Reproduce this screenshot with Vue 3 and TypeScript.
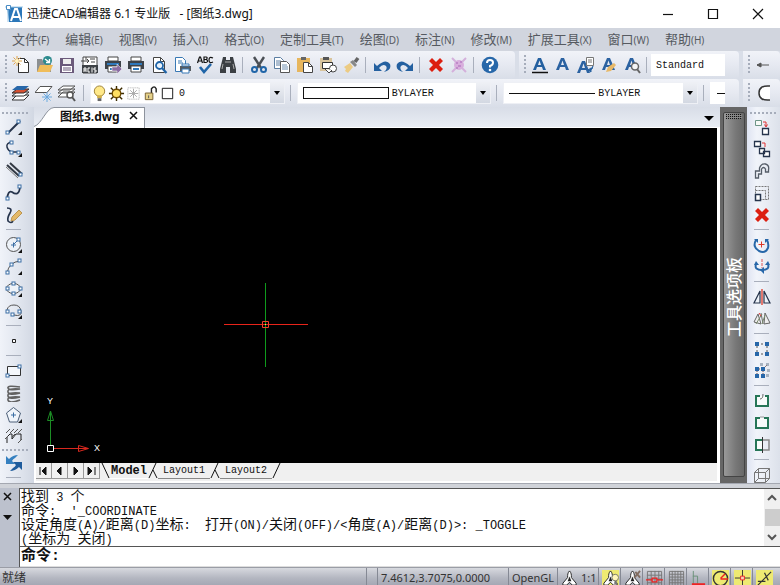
<script setup lang="ts">
import { ref } from 'vue'

const corner = '<path d="M17 13v4h-4z" fill="#111"/>'
const node = (x: number, y: number) =>
  `<rect x="${x}" y="${y}" width="3" height="3" fill="#fff" stroke="#3a6ea5"/>`
const letterA = (c: string) =>
  `<path d="M2 14L7 2h3l5 12h-3l-1-3H6l-1 3zM7 9h3L8.500 4.500z" fill="${c}" fill-rule="evenodd"/>`
const printer =
  '<path d="M4 1h10v4H4z" fill="#fff" stroke="#444"/><path d="M1 5h16v8H1z" fill="#3e4349"/><path d="M3 7h12v2H3z" fill="#2f79bd"/><path d="M4 10h10v6H4z" fill="#fff" stroke="#444"/><path d="M6 12h6v2H6z" fill="#2f79bd"/>'
const page =
  '<path d="M3.500 1.500h7l4 4v11h-11z" fill="#fff" stroke="#444"/><path d="M10.500 1.500v4h4" fill="none" stroke="#444"/>'
const scaleFig =
  '<path d="M9 1c2 2 2 4 2 7l5 6v2h-4l-3-3-3 3H2v-2l5-6c0-3 0-5 2-7z" fill="#fff" stroke="#222"/><path d="M9 7l-2 5h4z" fill="#222"/>'

const icons: Record<string, string> = {
  new: '<path d="M6.500 2.500h6l4 4v10h-10z" fill="#fff" stroke="#333"/><path d="M12.500 2.500v4h4" fill="none" stroke="#333"/><path d="M5 0v10M0 5h10M1.500 1.500l7 7M8.500 1.500l-7 7" stroke="#dfa34a"/><circle cx="5" cy="5" r="2" fill="#fff3c0"/>',
  open: '<path d="M2 3h5l1 2h8v11H2z" fill="#8b8f92"/><path d="M2 16l3-7h13l-3 7z" fill="#f0bd5a"/><circle cx="12.500" cy="4.500" r="4.500" fill="#2c8a8d"/><path d="M10 3l4 3M14.500 3v3.500H11" stroke="#fff" fill="none" stroke-width="1.400"/>',
  save: '<path d="M2 2h14v15H2z" fill="#6b5a7b"/><path d="M5 3h8v5H5z" fill="#eee"/><path d="M4 10h10v6H4z" fill="#fff"/><path d="M5 12h8M5 14h8" stroke="#6b5a7b"/>',
  acis: '<path d="M2 1h14v16H2z" fill="#fff" stroke="#444"/><path d="M1 9h16v8H1z" fill="#3e4247"/><path d="M3 16v-4h2v4M3 14h2M9 12H7v4h2M11 11.500v5M15 12h-2v2h2v2h-2" fill="none" stroke="#fff"/><path d="M0 5h8M6 3l2 2-2 2M9 3h5M10 6h4M5 1v3" stroke="#444" fill="none"/>',
  printPreview: printer + '<path d="M8 11h5V8l5 5-5 5v-3H8z" fill="#8b6da3" stroke="#fff" stroke-width=".5"/>',
  print: printer,
  preview: page + '<circle cx="9.500" cy="9.500" r="3.500" fill="#e8f2fb" stroke="#2065a8" stroke-width="1.800"/><path d="M12 12l4.500 5" stroke="#2065a8" stroke-width="2.200"/>',
  publish: '<path d="M2.500 1.500h7l3 3v11h-10z" fill="#fff" stroke="#3979b5"/><path d="M5 5h4M5 7h5" stroke="#3979b5"/><path d="M7 10h11v5H7z" fill="#555b62"/><path d="M9 8h7v2H9zM9 13h7v4H9z" fill="#fff" stroke="#3979b5"/>',
  spell: '<path d="M1.500 7l2-6h1l2 6M2.500 5h3M8 1v5.500h2q3-1 .5-3Q12 1 10 1zM8 3.500h2M17 2q-4-2-4 2t4 2" fill="none" stroke="#111" stroke-width="1.200"/><path d="M4 11l4 5 7-8" fill="none" stroke="#2065a8" stroke-width="2.600"/>',
  find: '<path d="M4 1h3v3h4V1h3l1 4 2 8v4h-6v-6H7v6H1v-4l2-8z" fill="#3b3f44"/><path d="M4 8l-1 5M14 8l1 5M6 6h6" stroke="#aaa"/>',
  cut: '<path d="M4 1l7 11M14 1L7 12" stroke="#4a4f55" stroke-width="2.400"/><circle cx="4.500" cy="13.500" r="2.500" fill="none" stroke="#2065a8" stroke-width="2"/><circle cx="13.500" cy="13.500" r="2.500" fill="none" stroke="#2065a8" stroke-width="2"/>',
  copy: '<path d="M1.500 1.500h6l3 3v8h-9z" fill="#fff" stroke="#5c7fa3"/><path d="M3 5h5M3 7h5M3 9h5" stroke="#5c7fa3"/><path d="M7.500 5.500h6l3 3v8h-9z" fill="#fff" stroke="#555"/><path d="M9 9h5M9 11h6M9 13h6" stroke="#6f8fb0"/>',
  paste: '<path d="M1 2h13v14H1z" fill="#e7b65d"/><path d="M5 1h5v3H5z" fill="#666"/><path d="M7.500 6.500h5l4 4v6h-9z" fill="#fff" stroke="#444"/><path d="M12.500 6.500v4h4" fill="none" stroke="#444"/>',
  pasteShape: '<path d="M1 2h12v13H1z" fill="#d8c49d"/><path d="M4 1h6v3H4z" fill="#555"/><path d="M3.500 6.500h10v6h-10z" fill="#fff" stroke="#333"/><circle cx="14" cy="12.500" r="3.500" fill="#fff" stroke="#444"/><path d="M6 13l4 4 3-3" fill="#fff" stroke="#444"/>',
  brush: '<path d="M2 11l6-4 3 4-5 6-3-2 1-2z" fill="#eccb83"/><path d="M8 6l5 5 2-2-4-5z" fill="#888"/><path d="M13 6l3-4" stroke="#666" stroke-width="3.500"/>',
  undo: '<path d="M1 7v8h8l-3-3q4-5 7-2 2 3-2 6 8-2 6-8-4-6-13 2z" fill="#2460a0"/>',
  redo: '<path d="M17 7v8H9l3-3Q8 7 5 10q-2 3 2 6-8-2-6-8 4-6 13 2z" fill="#2460a0"/>',
  erase: '<path d="M2 5l3-3 4 4 4-4 3 3-4 4 4 4-3 3-4-4-4 4-3-3 4-4z" fill="#dc1f10"/>',
  purge: '<circle cx="9" cy="9" r="5" fill="#d8aedd"/><path d="M2 2l4 4M16 2l-4 4M2 16l4-4M16 16l-4-4" stroke="#d4b0db" stroke-width="2"/><path d="M6 7h2M10 6h2M8 10h3M6 12h2" stroke="#c08aca" stroke-width="2"/>',
  help: '<circle cx="9" cy="9" r="8.300" fill="#2767a9"/><path d="M6 7q0-3 3-3t3 2.500T9 10v1.500" fill="none" stroke="#fff" stroke-width="2"/><circle cx="9" cy="14" r="1.300" fill="#fff"/>',
  textLine: letterA('#2460a0') + '<path d="M1 16.500h16" stroke="#111" stroke-width="1.500"/>',
  text: letterA('#2b62a1'),
  textStyle: '<g transform="translate(-2 3)">' + letterA('#2b62a1') + '</g><path d="M9.500 1.500h7v8h-7z" fill="#fff" stroke="#777"/><path d="M11 4h4M11 6h4" stroke="#777"/><path d="M12 14q4 0 4-4M11 14l3-2v4z" stroke="#2460a0" fill="#2460a0"/>',
  textEdit: letterA('#2b62a1') + '<path d="M6 16l2-5 6-4 2 2-5 6z" fill="#e8b968"/>',
  textFind: letterA('#2b62a1') + '<circle cx="12" cy="10.500" r="3.500" fill="#f6f6f6" stroke="#666" stroke-width="1.500"/><path d="M14 13l3 4" stroke="#666" stroke-width="2"/>',
  dimension: '<path d="M2 9h12" stroke="#555"/><path d="M2 9l4-2v4z" fill="#555" stroke="#555"/>',
  arcHalf: '<path d="M15 2Q4 1 4 9t11 7" fill="#fff" stroke="#333" stroke-width="1.500"/>',
  layers: '<path d="M5 11h12l-5 5H0z" fill="#fff" stroke="#333"/><path d="M5 8h12l-5 4H0z" fill="#fff" stroke="#333"/><path d="M5 5h12l-5 4H0z" fill="#d65030" stroke="#333"/><path d="M5 2h12l-5 4H0z" fill="#2767a9"/>',
  layerFreeze: '<path d="M5 2.500h12l-5 6H0z" fill="#fff" stroke="#555"/><path d="M12 8v10M7 13h10M8.500 9.500l7 7M15.500 9.500l-7 7" stroke="#6aa9df"/>',
  layerFind: '<path d="M5 8h12l-5 5H0zM5 5h12l-5 4H0zM5 2h12l-5 4H0z" fill="#fff" stroke="#555"/><circle cx="12" cy="11" r="3" fill="#fff" stroke="#555" stroke-width="1.500"/><path d="M14 13l3 4" stroke="#555" stroke-width="2"/>',
  bulb: '<circle cx="9" cy="6.500" r="5.500" fill="#ffe98a" stroke="#9b7d30"/><path d="M6.500 11h5v3h-5z" fill="#d2b048"/><path d="M7 14h4v3H7z" fill="#666"/>',
  sun: '<path d="M9 1v16M1 9h16M3 3l12 12M15 3L3 15" stroke="#3b2b00" stroke-width="1.500"/><circle cx="9" cy="9" r="4.500" fill="#ffdf62" stroke="#6d4a00" stroke-width="1.400"/>',
  frozen: '<path d="M3 3h12v12H3z" fill="none" stroke="#aaa" stroke-dasharray="1 1"/><path d="M9 4v10M4 9h10M5.500 5.500l7 7M12.500 5.500l-7 7" stroke="#aaa"/>',
  lock: '<path d="M10 9V4q3-4 5 0v4" fill="none" stroke="#222" stroke-width="1.500"/><path d="M3.500 8.500h8v7h-8z" fill="#e5d18a" stroke="#776030"/><path d="M7 11v3" stroke="#555"/>',
  swatch: '<path d="M3.500 3.500h11v11h-11z" fill="#fff" stroke="#111"/>',
  line: '<path d="M3 15L15 3" stroke="#26344c" stroke-width="2"/>' + node(1, 13) + node(12, 2) + corner,
  polyline: '<path d="M7 2Q1 3 2 7t5 5h7" fill="none" stroke="#26344c" stroke-width="1.500"/>' + node(5, 1) + node(5, 11) + node(12, 11) + corner,
  multiline: '<path d="M2 3l12 11M5 1l12 11" stroke="#333a44" stroke-width="2"/><path d="M1 5l12 11" stroke="#777"/>' + node(14, 11),
  spline: '<path d="M2 15Q3 6 7 8q7 5 8-5" fill="none" stroke="#26344c" stroke-width="1.800"/>' + node(1, 13) + node(13, 1),
  freehand: '<path d="M2 2q6 0 3 5t-2 8q3 3 5 0" fill="none" stroke="#26344c" stroke-width="1.700"/><path d="M6 15l1-4 7-7 3 3-7 7z" fill="#e4b969" stroke="#bb9550"/>',
  circle: '<circle cx="8.500" cy="8.500" r="7" fill="#edf2f8" stroke="#555"/><path d="M8 9l5-5M6 9h5M8.500 6.500v5" stroke="#3a6ea5"/>' + node(12, 2) + corner,
  arc: '<path d="M2 15Q4 4 15 3" fill="none" stroke="#555"/>' + node(1, 13) + node(5, 5) + node(13, 1) + corner,
  ellipse: '<ellipse cx="8.500" cy="8.500" rx="7" ry="5" fill="#edf2f8" stroke="#555"/>' + node(1, 7) + node(14, 7) + node(7, 2) + node(7, 12) + corner,
  ellipseArc: '<path d="M2 8q1-5 7-5t7 6-7 4" fill="none" stroke="#555"/>' + node(1, 8) + node(6, 11) + node(13, 8) + corner,
  point: '<path d="M7.500 7.500h3v3h-3z" fill="#fff" stroke="#222"/>',
  rect: '<path d="M2.500 4.500h13v9h-13z" fill="#f4f7fb" stroke="#333"/>' + node(1, 12) + node(13, 3),
  helix: '<path d="M15 3Q2 1 3 4t12 1Q2 4 3 8t12 1Q2 8 3 12t12 1Q2 12 3 16t12 0" fill="none" stroke="#626262" stroke-width="1.600"/>',
  polygon: '<path d="M8.500 1.500l7 5.500-3 9h-8l-3-9z" fill="#f0f5fb" stroke="#4c5f78"/><path d="M6 9h5M8.500 6.500v5" stroke="#3a6ea5"/>' + corner,
  hatch: '<path d="M2 15V9l3-3h2v5l4-5h5v6" fill="none" stroke="#222"/><path d="M1 5l4-4M5 5l4-4M9 5l4-4M13 5l4-4M0 11l3-3M13 15l4-4M7 9l3-3" stroke="#555"/>',
  refresh: '<path d="M1 10V2l3 3q4-4 9-4l-3 3q-2 1-3 3l3 3z" fill="#3580c0"/><path d="M17 8v8l-3-3q-4 4-9 4l3-3q2-1 3-3L8 8z" fill="#1f5c9c"/>',
  copyObj: '<path d="M2.500 2.500h6v5h-6z" fill="#f7faf7" stroke="#6d9587"/><path d="M10 4h3v4M11.500 6.500L13 9l1.500-2.500" fill="none" stroke="#d33"/><path d="M9.500 10.500h6v6h-6z" fill="#fff" stroke="#26344c" stroke-width="1.300"/>',
  copyMulti: '<path d="M1.500 1.500h6v5h-6z" fill="#fff" stroke="#26344c" stroke-width="1.300"/><path d="M9 3h3v4" fill="none" stroke="#d33"/><path d="M6.500 8.500h5v5h-5zM10.500 11.500h6v5h-6z" fill="#fff" stroke="#26344c" stroke-width="1.300"/>',
  offset: '<path d="M2.500 16v-7h4V6q2-5 6-4t3 6v2h-3V7q-2-3-4 0v5h-3v4z" fill="none" stroke="#555d68" stroke-width="1.300"/>',
  scale: '<path d="M2.500 2.500h13v13h-13zM2.500 6.500h10v9" fill="none" stroke="#777" stroke-dasharray="2 1"/><path d="M2.500 10.500h5v6h-5z" fill="#fff" stroke="#26344c" stroke-width="1.500"/>',
  rotate: '<path d="M3 4q-4 7 3 11 6 3 9-3 1-4-1-8" fill="none" stroke="#2767a9" stroke-width="2"/><path d="M1 3h4v4zM16 3h-4v4z" fill="#2767a9"/><path d="M5.500 8.500h6M8.500 5.500v6" stroke="#dd3928"/>',
  rotate3d: '<path d="M3 6q-2 6 6 6t6-6" fill="none" stroke="#2767a9" stroke-width="2"/><path d="M1 7l2-4 3 4zM12 7l3-4 2 4z" fill="#2767a9"/><path d="M9 1v9" stroke="#d55" stroke-dasharray="3 1"/><path d="M11 9v7l-4-4z" fill="#2767a9"/>',
  mirror: '<path d="M7 3v12H1zM11 3v12h6z" fill="#edf2f8" stroke="#26344c" stroke-width="1.200"/><path d="M9 1v16" stroke="#dd3928" stroke-width="1.300"/>',
  mirror3d: '<path d="M5 4l3 10-7-2zM12 3l5 10-6 1zM8 3l2 11" fill="#eee" stroke="#666"/><path d="M3 14l6-10M12 5l-3 9" stroke="#7b8b6c"/><path d="M6 3l2 3" stroke="#d33"/>',
  array: '<path d="M4 4h10v10H4z" fill="none" stroke="#555" stroke-dasharray="2 2"/><path d="M2 2h4v4H2zM12 2h4v4h-4zM2 12h4v4H2zM12 12h4v4h-4z" fill="#2767a9"/>',
  array3d: '<path d="M7 1h3v3H7zM13 1h3v3h-3zM14 7h3v3h-3z" fill="#a8b3c0"/><path d="M2 5h4v4H2zM8 5h4v4H8zM2 12h4v4H2zM8 12h4v4H8z" fill="#2767a9"/><path d="M4 9v3M6 7h2M10 9v3M12 5l2-2" stroke="#6b4b4b" stroke-dasharray="1 1"/><path d="M13 12h3v3h-3z" fill="#a8b3c0"/>',
  breakAt: '<path d="M7 4H3v10h12V4h-3" fill="#f8fbfa" stroke="#267657" stroke-width="2"/><path d="M7 7q3 0 3-5" stroke="#666" fill="none"/>',
  join: '<path d="M7 4H3v10h12V4h-4" fill="#f8fbfa" stroke="#267657" stroke-width="2"/><path d="M7 3h4" stroke="#999"/>',
  trim: '<path d="M10 4H3v10h7" fill="#f8fbfa" stroke="#267657" stroke-width="2"/><path d="M10 4h6v10h-6" fill="none" stroke="#888" stroke-width="1.500"/><path d="M9.500 1v16" stroke="#333"/>',
  box3d: '<path d="M1.500 6.500h11v10h-11zM1.500 6.500l4-4h11v10l-4 4M12.500 6.500l4-4M5.500 2.500v10l-4 4M5.500 12.500h11" fill="none" stroke="#777"/>',
  scaleFig,
  scaleBulb: '<path d="M0 0h18v18H0z" fill="#eeea72"/>' + scaleFig + '<circle cx="14" cy="8" r="3.500" fill="#fff6bb" stroke="#776"/><path d="M13 12h3v3h-3z" fill="#777"/>',
  scaleAuto: scaleFig + '<path d="M11 8l6-7M12 2l5 6" stroke="#826d61" stroke-width="2"/>',
  snap: '<path d="M1.500 1.500h15v15h-15zM5.500 1v16M9.500 1v16M13.500 1v16M1 5.500h16M1 9.500h16M1 13.500h16" fill="none" stroke="#777"/><path d="M6.500 8.500h5v4h-5zM0 10.500h6M12 10.500h6" fill="none" stroke="#e22" stroke-width="1.300"/>',
  grid: '<path d="M1.500 1.500h15v15h-15zM4.500 1v16M7.500 1v16M10.500 1v16M13.500 1v16M1 4.500h16M1 7.500h16M1 10.500h16M1 13.500h16" fill="none" stroke="#777"/>',
  ortho: '<path d="M3.500 1v14M3 6.500h5v8" fill="none" stroke="#6a9279"/><path d="M2 15h14" stroke="#e22" stroke-width="2"/>',
  polar: '<path d="M0 0h18v18H0z" fill="#eeea72"/><circle cx="9" cy="9" r="7.500" fill="none" stroke="#333" stroke-width="1.500"/><path d="M9 9.500h8M9 9l5-5" stroke="#e22" stroke-width="1.500"/>',
  osnap: '<path d="M0 0h18v18H0z" fill="#eeea72"/><path d="M9 0v18M1 8.500h16" stroke="#333"/><path d="M7 6.500h4v4H7z" fill="#f8d6b8" stroke="#e22"/>',
  otrack: '<path d="M0 0h18v18H0z" fill="#eeea72"/><path d="M2 16L16 2M9 3l4 8M2 12h8" stroke="#333" stroke-width="1.300"/>',
}

const menus = [
  ['文件', 'F'], ['编辑', 'E'], ['视图', 'V'], ['插入', 'I'], ['格式', 'O'], ['定制工具', 'T'],
  ['绘图', 'D'], ['标注', 'N'], ['修改', 'M'], ['扩展工具', 'X'], ['窗口', 'W'], ['帮助', 'H'],
]

const standardGroups = [
  ['new', 'open', 'save', 'acis', 'printPreview', 'print', 'preview', 'publish', 'spell', 'find'],
  ['cut', 'copy', 'paste', 'pasteShape', 'brush'],
  ['undo', 'redo'],
  ['erase', 'purge'],
  ['help'],
]
const textTools = ['textLine', 'text', 'textStyle', 'textEdit', 'textFind']
const layerTools = ['layers', 'layerFreeze', 'layerFind']
const layerState = ['bulb', 'sun', 'frozen', 'lock', 'swatch']
const drawGroups = [
  ['line', 'polyline', 'multiline', 'spline', 'freehand'],
  ['circle', 'arc', 'ellipse', 'ellipseArc'],
  ['point'],
  ['rect', 'helix', 'polygon', 'hatch'],
]
const modifyGroups = [
  ['copyObj', 'copyMulti', 'offset', 'scale', 'erase'],
  ['rotate', 'rotate3d'],
  ['mirror', 'mirror3d'],
  ['array', 'array3d'],
  ['breakAt', 'join', 'trim'],
  ['box3d'],
]
const modeToggles = ['scaleBulb', 'scaleAuto', 'snap', 'grid', 'ortho', 'polar', 'osnap', 'otrack']
const navButtons = [
  { name: 'first', d: 'M3 2v8M9 2v8L5 6z' },
  { name: 'previous', d: 'M8 2v8L4 6z' },
  { name: 'next', d: 'M5 2v8l4-4z' },
  { name: 'last', d: 'M3 2v8l4-4zM10 2v8' },
]

const history = [
  '找到 3 个',
  "命令:  '_COORDINATE",
  '设定角度(A)/距离(D)坐标:  打开(ON)/关闭(OFF)/<角度(A)/距离(D)>: _TOGGLE',
  '(坐标为 关闭)',
]
const isHan = (part: string) => /[\u4e00-\u9fff]/.test(part)
const runs = (line: string) => line.match(/[\u4e00-\u9fff]+|[^\u4e00-\u9fff]+/g) ?? []

const layouts = ['Model', 'Layout1', 'Layout2']
const activeLayout = ref('Model')
const command = ref('')
</script>

<template>
  <div class="app">
    <header class="titlebar">
      <svg class="logo" viewBox="0 0 18 18">
        <path d="M2 2h15v15H4z" fill="#2b77b9" />
        <path d="M6 16l4-12h2l4 12M8 12h6" fill="none" stroke="#fff" stroke-width="2" />
        <path d="M0 2h18M3 0v17" stroke="#9ec9e8" />
        <path d="M1.500.5h4v4h-4z" fill="#fff" stroke="#4a8cc4" />
      </svg>
      <h1>迅捷CAD编辑器 6.1 专业版&nbsp;&nbsp; - [图纸3.dwg]</h1>
      <div class="window-buttons">
        <button aria-label="最小化"><svg viewBox="0 0 12 12"><path d="M1 6.500h10" /></svg></button>
        <button aria-label="最大化"><svg viewBox="0 0 12 12"><path d="M1.500 1.500h9v9h-9z" /></svg></button>
        <button aria-label="关闭"><svg viewBox="0 0 12 12"><path d="M1 1l10 10M11 1L1 11" /></svg></button>
      </div>
    </header>

    <nav class="menubar">
      <button v-for="[name, key] in menus" :key="key">{{ name }}<small>({{ key }})</small></button>
    </nav>

    <div class="toolrow">
      <div class="toolbar">
        <span class="grip" />
        <template v-for="(group, g) in standardGroups" :key="g">
          <span v-if="g" class="sep" />
          <button v-for="i in group" :key="i" class="tool" :aria-label="i">
            <svg viewBox="0 0 18 18" v-html="icons[i]" />
          </button>
        </template>
      </div>
      <div class="toolbar text-bar">
        <span class="grip" />
        <button v-for="i in textTools" :key="i" class="tool" :aria-label="i">
          <svg viewBox="0 0 18 18" v-html="icons[i]" />
        </button>
        <span class="sep" />
        <select class="style-select" aria-label="文字样式"><option>Standard</option></select>
      </div>
      <div class="toolbar edge-bar">
        <span class="grip" />
        <button class="tool" aria-label="dimension"><svg viewBox="0 0 18 18" v-html="icons.dimension" /></button>
      </div>
    </div>

    <div class="toolrow">
      <div class="toolbar property-bar">
        <span class="grip" />
        <button v-for="i in layerTools" :key="i" class="tool" :aria-label="i">
          <svg viewBox="0 0 18 18" v-html="icons[i]" />
        </button>
        <span class="sep wide" />
        <div class="combo">
          <span class="sample">
            <svg v-for="i in layerState" :key="i" class="state" viewBox="0 0 18 18" v-html="icons[i]" />
          </span>
          <select aria-label="图层"><option>0</option></select>
          <svg class="arrow" viewBox="0 0 14 20"><path d="M4 8h6l-3 4z" /></svg>
        </div>
        <span class="sep wide" />
        <div class="combo">
          <span class="sample"><span class="color-box" /></span>
          <select aria-label="颜色"><option>BYLAYER</option></select>
          <svg class="arrow" viewBox="0 0 14 20"><path d="M4 8h6l-3 4z" /></svg>
        </div>
        <span class="sep wide" />
        <div class="combo">
          <span class="sample"><span class="line-sample" /></span>
          <select aria-label="线型"><option>BYLAYER</option></select>
          <svg class="arrow" viewBox="0 0 14 20"><path d="M4 8h6l-3 4z" /></svg>
        </div>
        <span class="sep wide" />
        <span class="weight"><span class="dash" /></span>
      </div>
      <div class="toolbar edge-bar">
        <span class="grip" />
        <button class="tool" aria-label="arc"><svg viewBox="0 0 18 18" v-html="icons.arcHalf" /></button>
      </div>
    </div>

    <main class="workspace">
      <div class="side-bar draw-bar">
        <span class="grip-h" />
        <template v-for="(group, g) in drawGroups" :key="g">
          <span v-if="g" class="sep-h" />
          <button v-for="i in group" :key="i" class="tool" :aria-label="i">
            <svg viewBox="0 0 18 18" v-html="icons[i]" />
          </button>
        </template>
        <span class="grip-h inner" />
        <button class="tool" aria-label="refresh"><svg viewBox="0 0 18 18" v-html="icons.refresh" /></button>
        <span class="sep-h" />
      </div>

      <section class="document">
        <div class="doc-tabs">
          <svg class="slope" viewBox="0 0 20 20"><path d="M0 20C8 18 12 1 20 .5V20z" fill="#fff" /><path d="M0 19.500C8 17 12 1 20 .5" fill="none" stroke="#8d939d" /></svg>
          <div class="doc-tab">
            <span>图纸3.dwg</span>
            <button aria-label="关闭图纸"><svg viewBox="0 0 10 10"><path d="M1 1l7 7M8 1L1 8" stroke="#111" stroke-width="1.500" /></svg></button>
          </div>
          <button class="tab-list" aria-label="图纸列表"><svg viewBox="0 0 10 6"><path d="M0 0h10L5 5z" /></svg></button>
        </div>
        <div class="canvas">
          <svg class="cursor" viewBox="0 0 86 86">
            <rect x="42" y="1" width="1" height="84" fill="#0f9a1c" />
            <rect x="1" y="42" width="84" height="1" fill="#e8241a" />
            <path d="M39.500 39.500h6v6h-6z" fill="none" stroke="#f0402c" />
            <rect x="42" y="42" width="1" height="1" fill="#ffe84a" />
          </svg>
          <svg class="ucs" viewBox="0 0 60 58">
            <path d="M8.500 15v36M5.500 23.500L8.500 14l3 9.500z" fill="none" stroke="#1c8d25" />
            <path d="M8 51.500h38M36.500 48.500l10 3-10 3z" fill="none" stroke="#d8281e" />
            <path d="M5.500 48.500h6v6h-6z" fill="#000" stroke="#fff" />
            <text x="5" y="7">Y</text>
            <text x="52" y="54">X</text>
          </svg>
        </div>
        <div class="layout-tabs">
          <button v-for="n in navButtons" :key="n.name" class="nav" :aria-label="n.name">
            <svg viewBox="0 0 13 12"><path :d="n.d" fill="#111" stroke="#111" /></svg>
          </button>
          <svg class="slant" viewBox="0 0 10 16"><path d="M2 0l7 15" /></svg>
          <template v-for="(l, k) in layouts" :key="l">
            <button class="layout" :class="{ active: l === activeLayout }" @click="activeLayout = l">{{ l }}</button>
            <svg class="slant" viewBox="0 0 10 16">
              <path :d="k < 2 ? 'M1 15L8 0M5 7l4 8' : 'M1 15L8 0'" />
            </svg>
          </template>
        </div>
      </section>

      <aside class="palette">
        <div class="palette-handle">
          <span class="dots" />
          <span class="palette-title">工具选项板</span>
        </div>
      </aside>

      <div class="side-bar modify-bar">
        <span class="grip-h" />
        <template v-for="(group, g) in modifyGroups" :key="g">
          <span v-if="g" class="sep-h" />
          <button v-for="i in group" :key="i" class="tool" :aria-label="i">
            <svg viewBox="0 0 18 18" v-html="icons[i]" />
          </button>
        </template>
      </div>
    </main>

    <section class="command">
      <div class="gutter">
        <button aria-label="关闭命令行"><svg viewBox="0 0 10 10"><path d="M1 1l7 7M8 1L1 8" stroke="#111" stroke-width="1.500" /></svg></button>
        <button aria-label="命令行选项"><svg viewBox="0 0 10 10"><path d="M0 3h9L4.500 8z" fill="#111" /></svg></button>
      </div>
      <div class="console">
        <div class="log">
          <div class="lines">
            <p v-for="line in history" :key="line"><span v-for="(r, k) in runs(line)" :key="k" :class="{ han: isHan(r) }">{{ r }}</span></p>
          </div>
          <div class="scroll">
            <svg viewBox="0 0 10 8"><path d="M1 6l4-4 4 4" /></svg>
            <span class="thumb" />
            <svg viewBox="0 0 10 8"><path d="M1 2l4 4 4-4" /></svg>
          </div>
        </div>
        <div class="prompt">
          <label for="command">命令:</label>
          <input id="command" v-model="command" type="text" autocomplete="off" />
        </div>
      </div>
    </section>

    <footer class="status">
      <span class="ready">就绪</span>
      <span class="cell blank" />
      <span class="cell coords">7.4612,3.7075,0.0000</span>
      <span class="cell renderer">OpenGL</span>
      <button class="cell ratio"><svg viewBox="0 0 18 18" v-html="icons.scaleFig" />1:1</button>
      <button v-for="i in modeToggles" :key="i" class="cell mode" :aria-label="i">
        <svg viewBox="0 0 18 18" v-html="icons[i]" />
      </button>
      <span class="cell resize" />
    </footer>
  </div>
</template>

<style>
body {
  margin: 0;
}
</style>

<style scoped>
.app {
  display: flex;
  flex-direction: column;
  height: 100vh;
  overflow: hidden;
  background: #d6dae4;
  font-family: "Noto Sans", "Noto Sans CJK SC", sans-serif;
  font-size: 12px;
  color: #111;
}
.app * {
  box-sizing: border-box;
}
button,
select,
input {
  appearance: none;
  margin: 0;
  padding: 0;
  border: 0;
  border-radius: 0;
  background: none;
  color: inherit;
  font: inherit;
}
svg {
  display: block;
  flex: none;
}

.titlebar {
  display: flex;
  flex: none;
  align-items: center;
  height: 28px;
  padding-left: 5px;
  background: #fff;
}
.logo {
  width: 18px;
  height: 18px;
}
h1 {
  flex: 1;
  margin: 0 0 0 4px;
  font-size: 12px;
  font-weight: 400;
  line-height: 24px;
  white-space: nowrap;
}
.window-buttons {
  display: flex;
}
.window-buttons button {
  display: grid;
  place-items: center;
  width: 45px;
  height: 26px;
}
.window-buttons svg {
  width: 12px;
  height: 12px;
  fill: none;
  stroke: #111;
  stroke-width: 1.2;
}

.menubar {
  display: flex;
  flex: none;
  gap: 16px;
  height: 23px;
  padding-left: 12px;
  background: #d1d5de;
  color: #565a61;
  font-size: 13px;
}
.menubar button {
  line-height: 20px;
  white-space: nowrap;
}
.menubar small {
  font-size: 10px;
}

.toolrow {
  display: flex;
  flex: none;
  gap: 4px;
  height: 28px;
  background: #d9dee8;
}
.toolbar {
  display: flex;
  flex: none;
  align-items: center;
  height: 28px;
  padding: 0 14px 0 4px;
  border-radius: 0 4px 4px 0;
  background: linear-gradient(#f1f3f8, #e6e9f1 50%, #d9dee8);
}
.grip {
  width: 5px;
  height: 20px;
  background: repeating-linear-gradient(#a6adbb 0 2px, transparent 2px 4px) 1px 0 / 2px 100% no-repeat;
}
.tool {
  display: grid;
  flex: none;
  place-items: center;
  width: 23px;
  height: 22px;
}
.tool svg {
  width: 18px;
  height: 18px;
}
.sep {
  flex: none;
  width: 8px;
  height: 16px;
  background: linear-gradient(#a9afbc, #a9afbc) 3px 0 / 1px 100% no-repeat;
}
.sep.wide {
  width: 12px;
  background-position: 5px 0;
}
.text-bar {
  flex: 1;
}
.style-select {
  flex: 1;
  min-width: 0;
  height: 22px;
  padding-left: 5px;
  background: #fff;
  font-family: "Liberation Mono", monospace;
  font-size: 10px;
}
.edge-bar {
  width: 37px;
  padding-right: 0;
  overflow: hidden;
}
.property-bar {
  flex: 1;
  min-width: 0;
}
.combo {
  display: grid;
  flex: 1;
  grid-template-columns: auto 1fr 14px;
  align-items: center;
  height: 22px;
  border: 1px solid #eef0f5;
  background: #fff;
  font-family: "Liberation Mono", monospace;
  font-size: 10px;
}
.combo select {
  grid-row: 1;
  grid-column: 2 / 4;
  width: 100%;
  height: 20px;
  padding-left: 3px;
}
.combo .arrow {
  grid-row: 1;
  grid-column: 3;
  width: 14px;
  height: 20px;
  background: linear-gradient(#eef0f5, #d3d8e2);
  pointer-events: none;
}
.sample {
  display: flex;
}
.state {
  width: 17px;
  height: 17px;
}
.color-box {
  width: 86px;
  height: 12px;
  margin-left: 5px;
  border: 1px solid #111;
}
.line-sample {
  width: 86px;
  height: 1px;
  margin-left: 5px;
  background: #111;
}
.weight {
  display: flex;
  align-items: center;
  justify-content: flex-end;
  width: 15px;
  height: 22px;
  background: #fff;
}
.dash {
  width: 8px;
  height: 1px;
  background: #111;
}

.workspace {
  display: flex;
  flex: 1;
  min-height: 0;
}
.side-bar {
  display: flex;
  flex: none;
  flex-direction: column;
  padding: 4px 0 0 2px;
  overflow: hidden;
  background: linear-gradient(90deg, #f0f3f9, #dfe4ed 60%, #d2d8e3);
}
.draw-bar {
  width: 34px;
}
.modify-bar {
  width: 33px;
  padding-left: 3px;
  background: linear-gradient(90deg, #dfe4f2, #f1f4fa 30%, #dce1ea);
}
.grip-h {
  flex: none;
  width: 26px;
  height: 5px;
  background: repeating-linear-gradient(90deg, #a6adbb 0 2px, transparent 2px 4px) 0 1px / 100% 2px no-repeat;
}
.grip-h.inner {
  height: 4px;
}
.sep-h {
  flex: none;
  width: 22px;
  height: 8px;
  background: linear-gradient(#a9afbc, #a9afbc) 4px 3px / 15px 1px no-repeat;
}

.document {
  display: flex;
  flex: 1;
  flex-direction: column;
  min-width: 0;
  padding-right: 3px;
  background: #fff;
}
.doc-tabs {
  display: flex;
  flex: none;
  height: 21px;
  margin-right: -3px;
  border-bottom: 1px solid #fff;
  background: linear-gradient(#d8dde7, #e9edf4);
}
.slope {
  width: 20px;
  height: 20px;
}
.doc-tab {
  display: flex;
  align-items: center;
  gap: 9px;
  height: 21px;
  padding: 0 5px 4px 6px;
  border-top: 1px solid #8d939d;
  border-right: 1px solid #8d939d;
  background: #fff;
  font-weight: 700;
}
.doc-tab svg {
  width: 10px;
  height: 10px;
}
.tab-list {
  margin: 4px 6px 0 auto;
}
.tab-list svg {
  width: 10px;
  height: 6px;
}
.canvas {
  position: relative;
  flex: 1;
  margin-left: 2px;
  background: #000;
}
.cursor {
  position: absolute;
  top: 154px;
  left: 187px;
  width: 86px;
  height: 86px;
}
.ucs {
  position: absolute;
  bottom: 8px;
  left: 6px;
  width: 60px;
  height: 58px;
  fill: #fff;
  font-family: "Liberation Sans", sans-serif;
  font-size: 9px;
}
.layout-tabs {
  display: flex;
  flex: none;
  height: 20px;
  margin-left: 2px;
  border-bottom: 2px solid #fff;
  background: #f0f0f0;
  font-family: "Liberation Mono", monospace;
  font-size: 10px;
}
.nav {
  display: grid;
  place-items: center;
  width: 16px;
  height: 16px;
  border-right: 1px solid #999;
  border-bottom: 1px solid #999;
}
.nav svg {
  width: 13px;
  height: 12px;
}
.slant {
  width: 10px;
  height: 16px;
  fill: none;
  stroke: #111;
}
.layout {
  height: 16px;
  padding: 0 5px;
  border-bottom: 1px solid #888;
}
.layout.active {
  padding: 0 1px;
  border-bottom-color: #fff;
  font-size: 12px;
  font-weight: 700;
}

.palette {
  flex: none;
  width: 27px;
  padding: 5px 2px 6px 3px;
  background: #666;
}
.palette-handle {
  display: flex;
  flex-direction: column;
  align-items: center;
  height: 100%;
  border: 1px solid #444;
  border-radius: 2px;
  background: linear-gradient(90deg, #999, #777 60%, #686868);
}
.dots {
  flex: none;
  width: 16px;
  height: 5px;
  margin-top: 1px;
  background:
    repeating-linear-gradient(transparent 0 1px, #8a8a8a 1px 2px),
    repeating-linear-gradient(90deg, #111 0 1px, transparent 1px 2px);
}
.palette-title {
  margin-top: 138px;
  color: #fff;
  font-size: 16px;
  font-weight: 500;
  line-height: 20px;
  writing-mode: vertical-rl;
  text-orientation: sideways;
  transform: rotate(180deg);
}

.command {
  display: flex;
  flex: none;
  height: 84px;
  padding-top: 4px;
  border-top: 1px solid #a4a8b1;
  background: #d0d3d9;
}
.gutter {
  display: flex;
  flex: none;
  flex-direction: column;
  align-items: center;
  gap: 10px;
  width: 19px;
  padding: 4px 3px 0 0;
  background: #bcc1cd;
}
.gutter svg {
  width: 10px;
  height: 10px;
}
.console {
  display: flex;
  flex: 1;
  flex-direction: column;
  min-width: 0;
  border-top: 1px solid #555;
  border-left: 1px solid #555;
  background: #fff;
}
.log {
  display: flex;
  height: 58px;
  border-bottom: 1px solid #555;
}
.lines {
  flex: 1;
  overflow: hidden;
  padding: 1px 0 0 1px;
  font-family: "Liberation Mono", "Noto Sans CJK SC", monospace;
  font-size: 12px;
}
.lines p {
  height: 14px;
  margin: 0;
  line-height: 14px;
  white-space: pre;
}
.han {
  font-size: 14px;
}
.scroll {
  display: flex;
  flex-direction: column;
  align-items: center;
  justify-content: space-between;
  width: 16px;
  padding: 5px 0;
  background: #f0f0f0;
}
.scroll svg {
  width: 10px;
  height: 8px;
  fill: none;
  stroke: #555;
  stroke-width: 2;
}
.thumb {
  width: 15px;
  height: 17px;
  background: #cdcdcd;
}
.prompt {
  display: flex;
  align-items: center;
  flex: 1;
  padding: 1px 0 0 1px;
  border-bottom: 1px solid #ddd;
  font-family: "Liberation Mono", "Noto Sans CJK SC", monospace;
  font-size: 15px;
  font-weight: 700;
  line-height: 18px;
}
.prompt input {
  flex: 1;
  padding-left: 4px;
  outline: 0;
}

.status {
  display: flex;
  flex: none;
  height: 18px;
  overflow: hidden;
  border-top: 1px solid #9a9da6;
  background: linear-gradient(#d7d9df, #b3b6c0 60%, #a5a8b4);
  color: #333;
  font-size: 11px;
  line-height: 20px;
}
.ready {
  flex: 1;
  padding-left: 2px;
  font-size: 12px;
}
.cell {
  display: flex;
  flex: none;
  gap: 3px;
  padding-left: 3px;
  border-left: 1px solid #858994;
}
.blank {
  width: 11px;
}
.coords {
  width: 131px;
}
.renderer {
  width: 49px;
}
.ratio {
  width: 41px;
}
.mode {
  width: 22px;
  padding-left: 3px;
}
.cell svg {
  width: 17px;
  height: 17px;
  margin-top: 2px;
}
.resize {
  width: 6px;
  border: 0;
}
</style>
